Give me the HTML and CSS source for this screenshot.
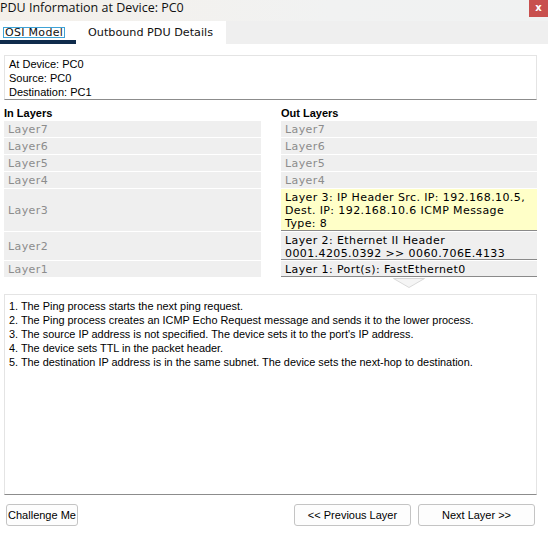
FILE: index.html
```html
<!DOCTYPE html>
<html>
<head>
<meta charset="utf-8">
<link rel="stylesheet" href="styles.css">
</head>
<body>
<div class="window">
  <div class="titlebar">
    <span class="title">PDU Information at Device: PC0</span>
    <span class="close">x</span>
  </div>
  <div class="tabbar">
    <div class="tab active"><span class="focus">OSI Model</span></div>
    <div class="tab">Outbound PDU Details</div>
  </div>
  <div class="main">
    <div class="info">
      <div>At Device: PC0</div>
      <div>Source: PC0</div>
      <div>Destination: PC1</div>
    </div>
    <div class="layers">
      <div class="head">In Layers</div>
      <div class="head">Out Layers</div>

      <div class="cell in">Layer7</div>
      <div class="cell">Layer7</div>
      <div class="cell in">Layer6</div>
      <div class="cell">Layer6</div>
      <div class="cell in">Layer5</div>
      <div class="cell">Layer5</div>
      <div class="cell in">Layer4</div>
      <div class="cell">Layer4</div>
      <div class="cell in">Layer3</div>
      <div class="cell active current">Layer 3: IP Header Src. IP: 192.168.10.5, Dest. IP: 192.168.10.6 ICMP Message Type: 8</div>
      <div class="cell in">Layer2</div>
      <div class="cell active">Layer 2: Ethernet II Header 0001.4205.0392 &gt;&gt; 0060.706E.4133</div>
      <div class="cell in">Layer1</div>
      <div class="cell active">Layer 1: Port(s): FastEthernet0</div>
    </div>
    <div class="arrowrow">
      <span></span>
      <svg class="arrow" width="32" height="11" viewBox="0 0 32 11">
        <polygon points="0.5,0.5 31.5,0.5 16,9.5" fill="#f5f5f5" stroke="#d9d9d9" stroke-width="1"/>
      </svg>
    </div>
    <div class="desc">
      <div>1. The Ping process starts the next ping request.</div>
      <div>2. The Ping process creates an ICMP Echo Request message and sends it to the lower process.</div>
      <div>3. The source IP address is not specified. The device sets it to the port's IP address.</div>
      <div>4. The device sets TTL in the packet header.</div>
      <div>5. The destination IP address is in the same subnet. The device sets the next-hop to destination.</div>
    </div>
    <div class="buttons">
      <button class="btn challenge">Challenge Me</button>
      <div class="nav">
        <button class="btn navbtn">&lt;&lt; Previous Layer</button>
        <button class="btn navbtn">Next Layer &gt;&gt;</button>
      </div>
    </div>
  </div>
</div>
</body>
</html>
```
FILE: styles.css
```css
* { box-sizing: border-box; }
html, body { margin: 0; padding: 0; background: #fff; }
.window { width: 548px; height: 551px; background: #fff; }

.titlebar {
  height: 21px;
  display: flex;
  justify-content: space-between;
  align-items: flex-start;
  background: linear-gradient(to right, #f4f0ea, #f1f2f2 60%, #f0f2f2);
}
.title {
  font-family: "Open Sans", sans-serif;
  font-size: 12.5px;
  line-height: 16px;
  color: #111;
  padding-left: 0;
}
.close {
  width: 19px;
  height: 17px;
  background: #c8504e;
  color: #fff;
  font-family: "DejaVu Sans", sans-serif;
  font-weight: bold;
  font-size: 10px;
  line-height: 15px;
  text-align: center;
}

.tabbar {
  height: 23px;
  display: flex;
  background: #efefef;
}
.tab {
  font-family: "DejaVu Sans", sans-serif;
  font-size: 11px;
  color: #111;
  background: #fff;
  height: 23px;
}
.tab.active {
  width: 76px;
  padding-left: 3px;
  padding-top: 6px;
  border-bottom: 4px solid #0f2b4c;
  line-height: 10px;
  letter-spacing: 0.3px;
}
.focus {
  display: inline-block;
  border: 1px solid #3fa3d6;
  padding: 0 1px;
  height: 11px;
  line-height: 9px;
}
.tab:not(.active) {
  width: 150px;
  padding-left: 12px;
  font-size: 11.2px;
  line-height: 24px;
}

.main {
  padding: 0 11px 0 4px;
}
.info {
  margin-top: 11px;
  height: 45px;
  border: 1px solid #e4e4e4;
  border-bottom-color: #8c8c8c;
  padding: 1px 4px;
  font-family: "Liberation Sans", Arial, sans-serif;
  font-size: 11px;
  line-height: 14px;
  color: #000;
}

.layers {
  margin-top: 7px;
  display: grid;
  grid-template-columns: 257px 256px;
  grid-template-rows: 13px 16px 16px 16px 16px 42px 28px 16px;
  column-gap: 20px;
  row-gap: 1px;
}
.head {
  font-family: "Liberation Sans", Arial, sans-serif;
  font-weight: bold;
  font-size: 11px;
  line-height: 13px;
  color: #000;
}
.cell {
  background: #efefef;
  font-family: "DejaVu Sans", sans-serif;
  font-size: 11px;
  letter-spacing: 0.4px;
  color: #8c8c8c;
  padding-left: 4px;
  display: flex;
  align-items: center;
  line-height: 13px;
}
.cell.active {
  color: #000;
  align-items: flex-start;
  padding-top: 2px;
  padding-right: 4px;
  border-bottom: 1px solid #8a8a8a;
}
.cell.current { background: #ffffc8; }

.arrowrow {
  height: 17px;
  display: grid;
  grid-template-columns: 257px 256px;
  column-gap: 20px;
}
.arrow {
  display: block;
  margin: 1px auto 0;
}

.desc {
  height: 201px;
  border: 1px solid #e4e4e4;
  border-bottom-color: #8c8c8c;
  padding: 4px 4px;
  font-family: "Liberation Sans", Arial, sans-serif;
  font-size: 10.9px;
  line-height: 14px;
  color: #000;
}

.buttons {
  margin-top: 9px;
  padding: 0 2px;
  display: flex;
  justify-content: space-between;
}
.nav { display: flex; gap: 7px; }
.btn {
  height: 22px;
  border: 1px solid #c4c4c4;
  border-radius: 3px;
  background: #fdfdfd;
  font-family: "Liberation Sans", Arial, sans-serif;
  font-size: 11px;
  color: #000;
  padding: 0;
  margin: 0;
  white-space: nowrap;
}
.challenge { width: 72px; }
.navbtn { width: 117px; }
```
